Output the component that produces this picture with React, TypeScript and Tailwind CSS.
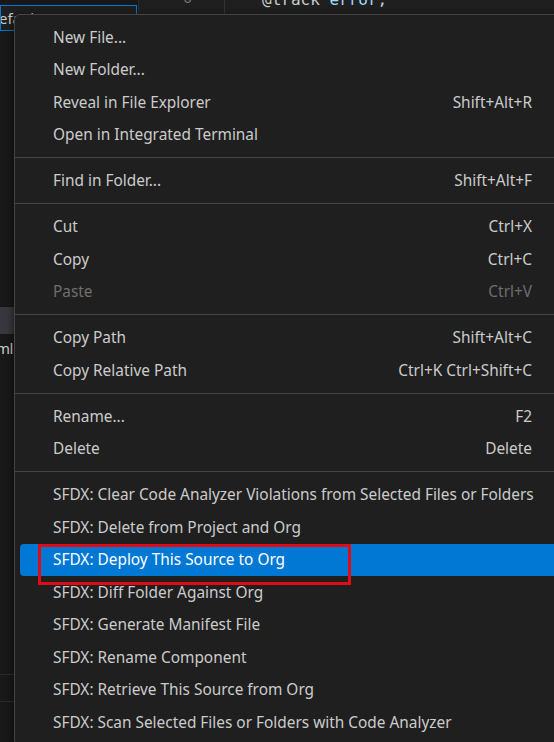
import React from "react";

type Item = { label: string; shortcut?: string; disabled?: boolean; active?: boolean } | "sep";

const items: Item[] = [
  { label: "New File..." },
  { label: "New Folder..." },
  { label: "Reveal in File Explorer", shortcut: "Shift+Alt+R" },
  { label: "Open in Integrated Terminal" },
  "sep",
  { label: "Find in Folder...", shortcut: "Shift+Alt+F" },
  "sep",
  { label: "Cut", shortcut: "Ctrl+X" },
  { label: "Copy", shortcut: "Ctrl+C" },
  { label: "Paste", shortcut: "Ctrl+V", disabled: true },
  "sep",
  { label: "Copy Path", shortcut: "Shift+Alt+C" },
  { label: "Copy Relative Path", shortcut: "Ctrl+K Ctrl+Shift+C" },
  "sep",
  { label: "Rename...", shortcut: "F2" },
  { label: "Delete", shortcut: "Delete" },
  "sep",
  { label: "SFDX: Clear Code Analyzer Violations from Selected Files or Folders" },
  { label: "SFDX: Delete from Project and Org" },
  { label: "SFDX: Deploy This Source to Org", active: true },
  { label: "SFDX: Diff Folder Against Org" },
  { label: "SFDX: Generate Manifest File" },
  { label: "SFDX: Rename Component" },
  { label: "SFDX: Retrieve This Source from Org" },
  { label: "SFDX: Scan Selected Files or Folders with Code Analyzer" },
];

export default function App() {
  return (
    <div
      className="relative w-[554px] h-[742px] overflow-hidden bg-[#1f1f1f]"
      style={{ fontFamily: '"Noto Sans", "Open Sans", sans-serif' }}
    >
      {/* background workbench */}
      <div className="flex h-full">
        <div className="flex flex-col w-[138px] h-full bg-[#181818] pt-[5px]">
          <div className="w-[137px] h-[26px] border border-[#0078d4] bg-[#1f1f1f] flex items-center text-[15px] text-[#cccccc] overflow-hidden">
            <span className="-ml-[2px]">efault</span>
          </div>
          <div className="h-[276px]" />
          <div className="h-[27px] bg-[#37373d]" />
          <div className="h-[28px] flex items-center text-[15px] text-[#cccccc] overflow-hidden">
            <span className="-ml-[4px] tracking-[-0.5px]">ml</span>
          </div>
          <div className="h-[312px]" />
          <div className="h-px bg-[#2b2b2b]" />
          <div className="h-[26px]" />
          <div className="h-px bg-[#2b2b2b]" />
        </div>
        <div className="flex flex-1 h-full bg-[#1f1f1f] border-l border-[#2b2b2b] -mt-[10px]">
          <div
            className="w-[86px] pl-[44px] text-[15px] leading-[20px] text-[#6e7681] border-r border-[#333333] h-[24px]"
            style={{ fontFamily: '"Liberation Mono", monospace' }}
          >
            6
          </div>
          <div
            className="pl-[37px] text-[16px] leading-[20px] whitespace-pre"
            style={{ fontFamily: '"DejaVu Sans Mono", monospace' }}
          >
            <span className="text-[#cccccc]">@track </span>
            <span className="text-[#9cdcfe]">error</span>
            <span className="text-[#cccccc]">;</span>
          </div>
        </div>
      </div>

      {/* context menu */}
      <div className="absolute left-[14px] top-[14px] w-[547px] rounded-[6px] border border-[#454545] bg-[#1f1f1f] py-[6px] px-[5px] shadow-[0_2px_8px_rgba(0,0,0,0.6)]">
        {items.map((it, i) =>
          it === "sep" ? (
            <div key={i} className="h-[13.5px] flex items-center -mx-[5px]">
              <div className="h-px w-full bg-[#454545]" />
            </div>
          ) : (
            <div
              key={i}
              className={
                "relative h-[32.5px] flex items-center justify-between pl-[33px] pr-[23px] text-[15.4px] rounded-l-[4px] " +
                (it.active
                  ? "bg-[#0078d4] text-white"
                  : it.disabled
                  ? "text-[#6e6e6e]"
                  : "text-[#cccccc]")
              }
            >
              <span className="whitespace-nowrap">{it.label}</span>
              {it.shortcut && <span className="whitespace-nowrap">{it.shortcut}</span>}
              {it.active && (
                <div className="absolute left-[18px] top-0 w-[313px] h-[41px] border-[3px] border-[#e10b17]" />
              )}
            </div>
          )
        )}
      </div>
    </div>
  );
}
